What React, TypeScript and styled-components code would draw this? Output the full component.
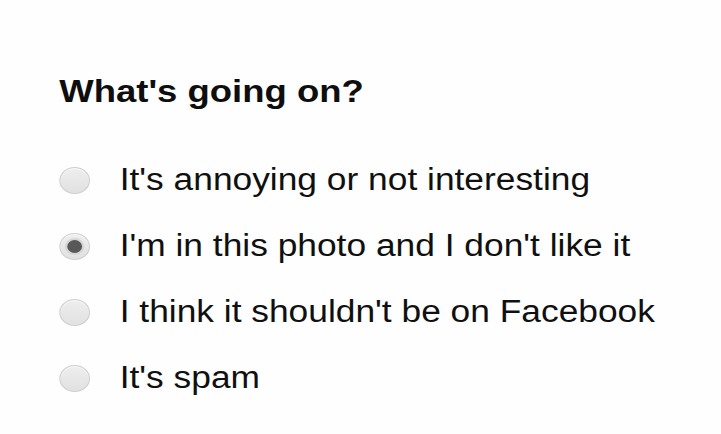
import React from "react";
import styled, { createGlobalStyle } from "styled-components";

const GlobalStyle = createGlobalStyle`
  html, body {
    margin: 0;
    padding: 0;
    background: #ffffff;
  }
  body {
    font-family: "Liberation Sans", Arial, sans-serif;
  }
`;

const Page = styled.div`
  width: 721px;
  height: 434px;
  overflow: hidden;
  background: #fefefe;
`;

const Panel = styled.div`
  display: flex;
  flex-direction: column;
  padding: 73px 0 0 52px;
  transform: scaleX(1.14);
  transform-origin: 0 0;
`;

const Heading = styled.h2`
  margin: 0;
  font-family: "Liberation Sans", Arial, sans-serif;
  font-size: 32px;
  line-height: 36px;
  font-weight: 700;
  color: #0e0e0e;
  white-space: nowrap;
`;

const OptionList = styled.div`
  display: flex;
  flex-direction: column;
  gap: 30px;
  margin-top: 53px;
`;

const OptionRow = styled.label`
  display: flex;
  align-items: center;
  gap: 26px;
  height: 36px;
`;

const Radio = styled.span<{ $checked?: boolean }>`
  position: relative;
  flex: none;
  width: 27px;
  height: 27px;
  box-sizing: border-box;
  border-radius: 50%;
  border: 1px solid #cfcfcf;
  background: linear-gradient(180deg, #eeeeee 0%, #e1e1e1 100%);
  box-shadow: inset 0 1px 1px rgba(255, 255, 255, 0.7);

  &::after {
    content: "";
    display: ${(p) => (p.$checked ? "block" : "none")};
    position: absolute;
    left: 50%;
    top: 50%;
    width: 13px;
    height: 13px;
    margin: -6.5px 0 0 -6.5px;
    border-radius: 50%;
    background: #585858;
    box-shadow: 0 0 0 2px #d6d6d6;
  }
`;

const OptionText = styled.span`
  font-family: "Liberation Sans", Arial, sans-serif;
  font-size: 31px;
  line-height: 36px;
  color: #101010;
  white-space: nowrap;
`;

const options = [
  { label: "It's annoying or not interesting", checked: false },
  { label: "I'm in this photo and I don't like it", checked: true },
  { label: "I think it shouldn't be on Facebook", checked: false },
  { label: "It's spam", checked: false },
];

export default function App() {
  return (
    <Page>
      <GlobalStyle />
      <Panel>
        <Heading>What's going on?</Heading>
        <OptionList>
          {options.map((o) => (
            <OptionRow key={o.label}>
              <Radio $checked={o.checked} />
              <OptionText>{o.label}</OptionText>
            </OptionRow>
          ))}
        </OptionList>
      </Panel>
    </Page>
  );
}
